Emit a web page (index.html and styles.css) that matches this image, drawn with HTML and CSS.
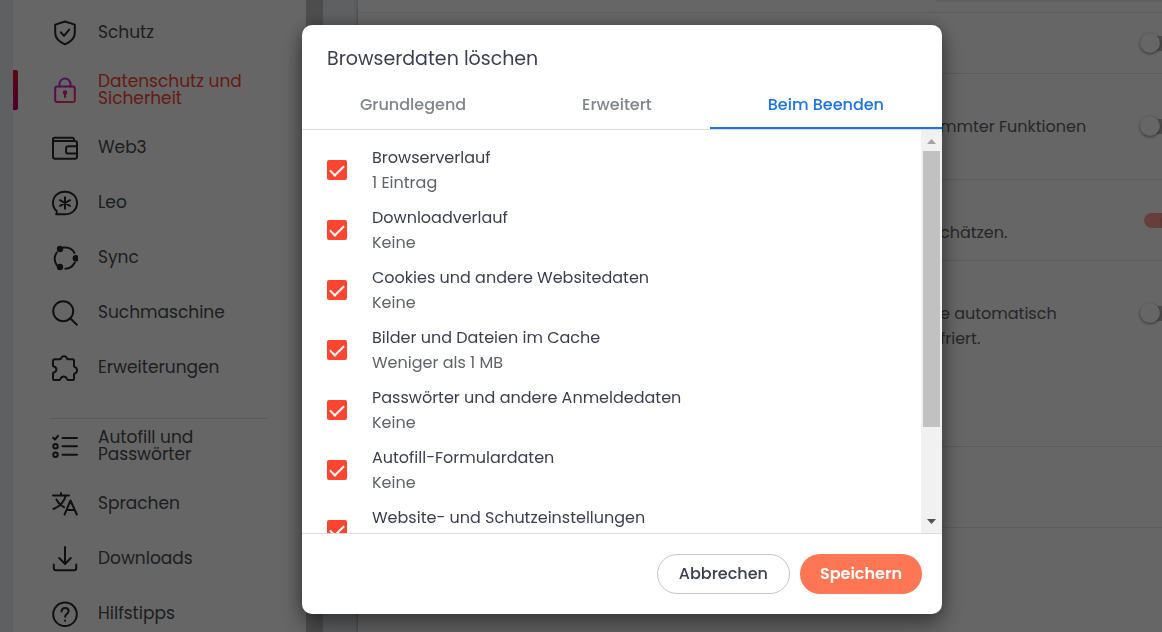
FILE: index.html
```html
<!DOCTYPE html>
<html lang="de">
<head>
  <meta charset="UTF-8" />
  <meta name="viewport" content="width=device-width, initial-scale=1.0"/>
  <title>Einstellungen</title>
  <link rel="stylesheet" href="styles.css">
</head>
<body>
  <div class="page">
    <nav class="sidebar">
      <a class="nav-item" href="#schutz">
        <svg class="icon" viewBox="0 0 26 26"><path d="M13 1.500 22.800 4.600V13c0 5.600-4.500 9-9.800 11.400C7.700 22 3.200 18.600 3.200 13V4.600z"/><path d="m8.800 12.400 3.200 3.400 5.200-6.200"/></svg>
        <span>Schutz</span>
      </a>
      <a class="nav-item two-line active" href="#datenschutz">
        <svg class="icon" viewBox="0 0 26 26">
          <defs>
            <linearGradient id="lock" gradientUnits="userSpaceOnUse" x1="8" y1="0" x2="19" y2="26">
              <stop offset="0" stop-color="#a83cf0"/>
              <stop offset="0.6" stop-color="#e8189a"/>
              <stop offset="1" stop-color="#ff3f5c"/>
            </linearGradient>
          </defs>
          <g stroke="url(#lock)"><rect x="3.200" y="9.600" width="19.600" height="15.400" rx="2"/><path d="M7.500 9.500V7a5.500 5.500 0 0 1 11 0v2.500M13 16v4"/><circle cx="13" cy="15.500" r="1.200"/></g>
        </svg>
        <span>Datenschutz und Sicherheit</span>
      </a>
      <a class="nav-item" href="#web3">
        <svg class="icon" viewBox="0 0 26 26"><path d="M22 6V4.500A1.800 1.800 0 0 0 20.200 2.700H2.600A1.500 1.500 0 0 0 1 4.200v17.300A2.200 2.200 0 0 0 3.200 23.700h19.600a2.200 2.200 0 0 0 2.200-2.200V8.200A2.200 2.200 0 0 0 22.800 6H2.600A1.600 1.600 0 0 1 1 4.400"/><path d="M25 11.200h-8.700a2.200 2.200 0 0 0-2.200 2.200v3a2.200 2.200 0 0 0 2.200 2.200H25"/></svg>
        <span>Web3</span>
      </a>
      <a class="nav-item" href="#leo">
        <svg class="icon" viewBox="0 0 26 26"><path d="M4.200 24.300h8.800c7 0 12-4.700 12-11.300S20 1.700 13 1.700 1 6.400 1 13c0 3.300 1.200 6 3.600 8 .4 1.200.3 2.200-.4 3.300z"/><path d="M13 7.300v11.400M8 10.200l10 5.600M18 10.200 8 15.800"/></svg>
        <span>Leo</span>
      </a>
      <a class="nav-item" href="#sync">
        <svg class="icon" viewBox="0 0 26 26"><path d="M11.500 2.500c5-.6 9 1.600 11 5.400M22.800 17.500c-2 4-5.500 6.200-9.500 6.200M4.800 7.500C2 11.500 2 16 4.800 20.200"/><g class="filled"><circle cx="8" cy="4" r="2.200"/><circle cx="23.800" cy="13.300" r="2.200"/><circle cx="8" cy="22" r="2.200"/></g></svg>
        <span>Sync</span>
      </a>
      <a class="nav-item" href="#suche">
        <svg class="icon" viewBox="0 0 26 26"><circle cx="11.200" cy="11.200" r="10"/><path d="m18.200 18.200 6.600 6.600"/></svg>
        <span>Suchmaschine</span>
      </a>
      <a class="nav-item" href="#erweiterungen">
        <svg class="icon" viewBox="0 0 26 26"><path d="M3 4.300h5.200c.5 0 .8-.4.900-.9C9.500 2 10.700 1.200 12 1.200s2.500.8 2.900 2.200c.1.500.4.900.9.900h4.700c.8 0 1.500.7 1.500 1.500v5.300c0 .5.400.8.900 1 1.400.4 2.100 1.700 2.100 3.200s-.7 2.800-2.100 3.200c-.5.200-.9.500-.9 1v4c0 .8-.7 1.500-1.500 1.500H16c-.6 0-.9-.5-1.100-1-.6-1.600-1.600-2.400-3.200-2.400s-2.600.8-3.200 2.400c-.2.500-.5 1-1.100 1H2.500C1.700 25 1 24.300 1 23.500v-5c0-.5.400-.8.900-1 1.600-.5 2.500-1.500 2.500-3s-.9-2.500-2.500-3c-.5-.2-.9-.5-.9-1V6.300c0-1.100.9-2 2-2z"/></svg>
        <span>Erweiterungen</span>
      </a>
      <hr class="divider">
      <a class="nav-item two-line" href="#autofill">
        <svg class="icon" viewBox="0 0 26 26"><path d="M10.500 5H25M10.500 13.300H25M10.500 21.700H25M1.200 4.700 3 6.500 6 2.800"/><circle cx="3.500" cy="13.300" r="2.200"/><circle cx="3.500" cy="21.700" r="2.200"/></svg>
        <span>Autofill und Passwörter</span>
      </a>
      <a class="nav-item" href="#sprachen">
        <svg class="icon" viewBox="0 0 26 26"><path d="M1 4.500h16M9 2v2.500M13.800 4.500C12.300 10.500 8.500 15.200 1.500 18M4.500 8.500c1.800 3.500 4.200 6 7.500 7.600"/><path d="m12.600 23.500 5.900-14 6.300 14M14.500 19h8.300"/></svg>
        <span>Sprachen</span>
      </a>
      <a class="nav-item" href="#downloads">
        <svg class="icon" viewBox="0 0 26 26"><path d="M13 1v16.500M7.200 12l5.800 6 5.800-6M1.800 18.500v3.700a2 2 0 0 0 2 2h18.400a2 2 0 0 0 2-2v-3.700"/></svg>
        <span>Downloads</span>
      </a>
      <a class="nav-item" href="#hilfe">
        <svg class="icon" viewBox="0 0 26 26"><circle cx="13" cy="13.300" r="11.800"/><path d="M9.600 10.500c0-2.200 1.400-3.600 3.500-3.600s3.500 1.300 3.500 3.200c0 2.900-3.500 2.800-3.500 5.700"/><path d="M13.100 19.500v.2"/></svg>
        <span>Hilfstipps</span>
      </a>
    </nav>

    <div class="page-scrollbar"></div>

    <main class="settings">
      <div class="row row-cut"><div class="field-edge"></div></div>
      <div class="row row-single">
        <input class="toggle" type="checkbox" aria-label="Option 1">
      </div>
      <div class="row row-tall">
        <p class="desc">mmter Funktionen</p>
        <input class="toggle" type="checkbox" aria-label="Option 2">
      </div>
      <div class="row row-double">
        <p class="desc below-title">chätzen.</p>
        <input class="toggle" type="checkbox" aria-label="Option 3" checked>
      </div>
      <div class="row row-group">
        <p class="desc below-title">e automatisch<br>friert.</p>
        <input class="toggle" type="checkbox" aria-label="Option 4">
      </div>
      <div class="row row-double"></div>
    </main>
  </div>

  <div class="overlay">
    <div class="dialog" role="dialog" aria-labelledby="dialogTitle">
      <h1 class="dialog-title" id="dialogTitle">Browserdaten löschen</h1>

      <div class="tabs" role="tablist">
        <button class="tab" role="tab">Grundlegend</button>
        <button class="tab" role="tab">Erweitert</button>
        <button class="tab selected" role="tab" aria-selected="true">Beim Beenden</button>
      </div>

      <div class="dialog-body">
        <div class="list">
          <label class="item">
            <input class="check" type="checkbox" checked>
            <span class="item-text">Browserverlauf<small>1 Eintrag</small></span>
          </label>
          <label class="item">
            <input class="check" type="checkbox" checked>
            <span class="item-text">Downloadverlauf<small>Keine</small></span>
          </label>
          <label class="item">
            <input class="check" type="checkbox" checked>
            <span class="item-text">Cookies und andere Websitedaten<small>Keine</small></span>
          </label>
          <label class="item">
            <input class="check" type="checkbox" checked>
            <span class="item-text">Bilder und Dateien im Cache<small>Weniger als 1 MB</small></span>
          </label>
          <label class="item">
            <input class="check" type="checkbox" checked>
            <span class="item-text">Passwörter und andere Anmeldedaten<small>Keine</small></span>
          </label>
          <label class="item">
            <input class="check" type="checkbox" checked>
            <span class="item-text">Autofill-Formulardaten<small>Keine</small></span>
          </label>
          <label class="item">
            <input class="check" type="checkbox" checked>
            <span class="item-text">Website- und Schutzeinstellungen</span>
          </label>
        </div>
        <div class="scrollbar">
          <svg class="arrow" viewBox="0 0 21 21"><path d="M6 14h9l-4.500-5z" fill="#a3a3a3"/></svg>
          <div class="track"><div class="thumb"></div></div>
          <svg class="arrow" viewBox="0 0 21 21"><path d="M6 7h9l-4.500 5z" fill="#505050"/></svg>
        </div>
      </div>

      <div class="dialog-footer">
        <button class="btn">Abbrechen</button>
        <button class="btn btn-primary">Speichern</button>
      </div>
    </div>
  </div>
</body>
</html>
```

FILE: styles.css
```css
* {
  box-sizing: border-box;
}

html, body {
  margin: 0;
  height: 100%;
  overflow: hidden;
  background-color: #eceff3;
  font-family: Poppins, Inter, sans-serif;
  font-size: 16px;
  line-height: 25px;
}

button, input {
  font: inherit;
  margin: 0;
}

/* settings page */
.page {
  display: flex;
  height: 100%;
  padding-left: 13px;
}

.sidebar {
  flex: none;
  width: 293px;
  padding-top: 5px;
  background: #fff;
  overflow: hidden;
}

.nav-item {
  position: relative;
  display: flex;
  align-items: center;
  gap: 20px;
  height: 55px;
  padding: 0 40px 0 39px;
  color: #4a4c50;
  font-size: 17px;
  font-weight: 400;
  line-height: 17px;
  text-decoration: none;
}

.nav-item.two-line {
  height: 60px;
}

.two-line span {
  max-width: 152px;
}

.nav-item.active {
  color: #ff4430;
}

.nav-item.active::before {
  content: "";
  position: absolute;
  left: 0;
  top: 10px;
  width: 5px;
  height: 40px;
  border-radius: 0 2px 2px 0;
  background: linear-gradient(#ee1030, #b8006e);
}

.icon {
  flex: none;
  width: 26px;
  height: 26px;
  fill: none;
  stroke: #2a2a2a;
  stroke-width: 2;
  stroke-linecap: round;
  stroke-linejoin: round;
}

.icon .filled {
  fill: #2a2a2a;
}

.divider {
  height: 1px;
  margin: 23px 39px -3px 37px;
  border: 0;
  background: #dcdde0;
}

.page-scrollbar {
  flex: none;
  width: 17px;
  background: #c1c1c1;
}

.settings {
  flex: 1;
  margin-left: 35px;
  background: #fff;
  box-shadow: 0 0 3px rgba(0, 0, 0, 0.4);
}

.row {
  display: flex;
  align-items: center;
  padding-left: 582px;
  border-bottom: 1px solid #e6e6e8;
}

.row-cut {
  align-items: flex-start;
  height: 13px;
  padding-left: 577px;
}

.field-edge {
  flex: 1;
  height: 2px;
  border-radius: 0 0 0 2px;
  background: #ebebed;
}

.row-single {
  height: 61px;
}

.row-tall {
  height: 106px;
}

.row-double {
  height: 81px;
}

.row-group {
  height: 186px;
  padding-bottom: 80px;
}

.desc {
  margin: 0;
  color: #5f6368;
  white-space: nowrap;
}

.below-title {
  padding-top: 25px;
}

.toggle {
  appearance: none;
  position: relative;
  flex: none;
  width: 34px;
  height: 15px;
  margin-left: auto;
  margin-right: -16px;
  border-radius: 8px;
  background: #bdbdbd;
}

.toggle::before {
  content: "";
  position: absolute;
  left: -4px;
  top: -3px;
  width: 20px;
  height: 20px;
  border-radius: 50%;
  background: #fff;
  box-shadow: 0 1px 3px rgba(0, 0, 0, 0.5);
}

.toggle:checked {
  background: #ff9f92;
}

.toggle:checked::before {
  left: 18px;
  background: #ff4430;
}

/* dialog */
.overlay {
  position: fixed;
  inset: 0;
  display: flex;
  justify-content: center;
  align-items: flex-start;
  padding: 25px 0 18px 82px;
  background: rgba(0, 0, 0, 0.6);
}

.dialog {
  display: flex;
  flex-direction: column;
  width: 640px;
  max-height: 100%;
  border-radius: 10px;
  background: #fff;
  color: #3b3e4f;
  overflow: hidden;
  box-shadow: 0 0 16px rgba(0, 0, 0, 0.25), 0 12px 24px rgba(0, 0, 0, 0.4);
}

.dialog-title {
  margin: 0;
  padding: 21px 25px 8px;
  font-size: 19px;
  font-weight: 400;
  line-height: 25px;
}

.tabs {
  display: flex;
  flex: none;
  height: 51px;
  border-bottom: 1px solid #dadce0;
}

.tab {
  flex: 1 1 auto;
  padding: 2px 0 0;
  border: 0;
  border-bottom: 2px solid transparent;
  background: none;
  color: #80868b;
  font-weight: 500;
}

.tab.selected {
  color: #1a73e8;
  border-bottom-color: #1a73e8;
}

.dialog-body {
  display: flex;
  min-height: 0;
}

.list {
  flex: 1;
  padding: 10px 25px;
  overflow: hidden;
}

.item {
  display: flex;
  align-items: center;
  gap: 25px;
  height: 60px;
}

.item-text {
  min-height: 50px;
}

.item-text small {
  display: block;
  color: #5f6368;
  font-size: 16px;
}

.check {
  appearance: none;
  position: relative;
  flex: none;
  width: 20px;
  height: 20px;
  border-radius: 2px;
  background: #ff4430;
}

.check::after {
  content: "";
  position: absolute;
  left: 6px;
  top: 2px;
  width: 6px;
  height: 12px;
  border: solid #fff;
  border-width: 0 2px 2px 0;
  transform: rotate(45deg);
}

.scrollbar {
  display: flex;
  flex-direction: column;
  flex: none;
  width: 21px;
  background: #f1f1f1;
}

.arrow {
  flex: none;
  width: 21px;
  height: 21px;
}

.track {
  flex: 1;
  padding: 0 2px;
}

.thumb {
  height: 76.5%;
  background: #c1c1c1;
}

.dialog-footer {
  display: flex;
  flex: none;
  justify-content: flex-end;
  gap: 10px;
  padding: 20px;
  border-top: 1px solid #dadce0;
}

.btn {
  height: 40px;
  padding: 0 21px 2px;
  border: 1px solid #c2c4cf;
  border-radius: 20px;
  background: #fff;
  color: #3b3e4f;
  font-weight: 500;
}

.btn-primary {
  padding: 0 20px 2px;
  border: 0;
  background: #ff7654;
  color: #fff;
  font-weight: 600;
}
```
